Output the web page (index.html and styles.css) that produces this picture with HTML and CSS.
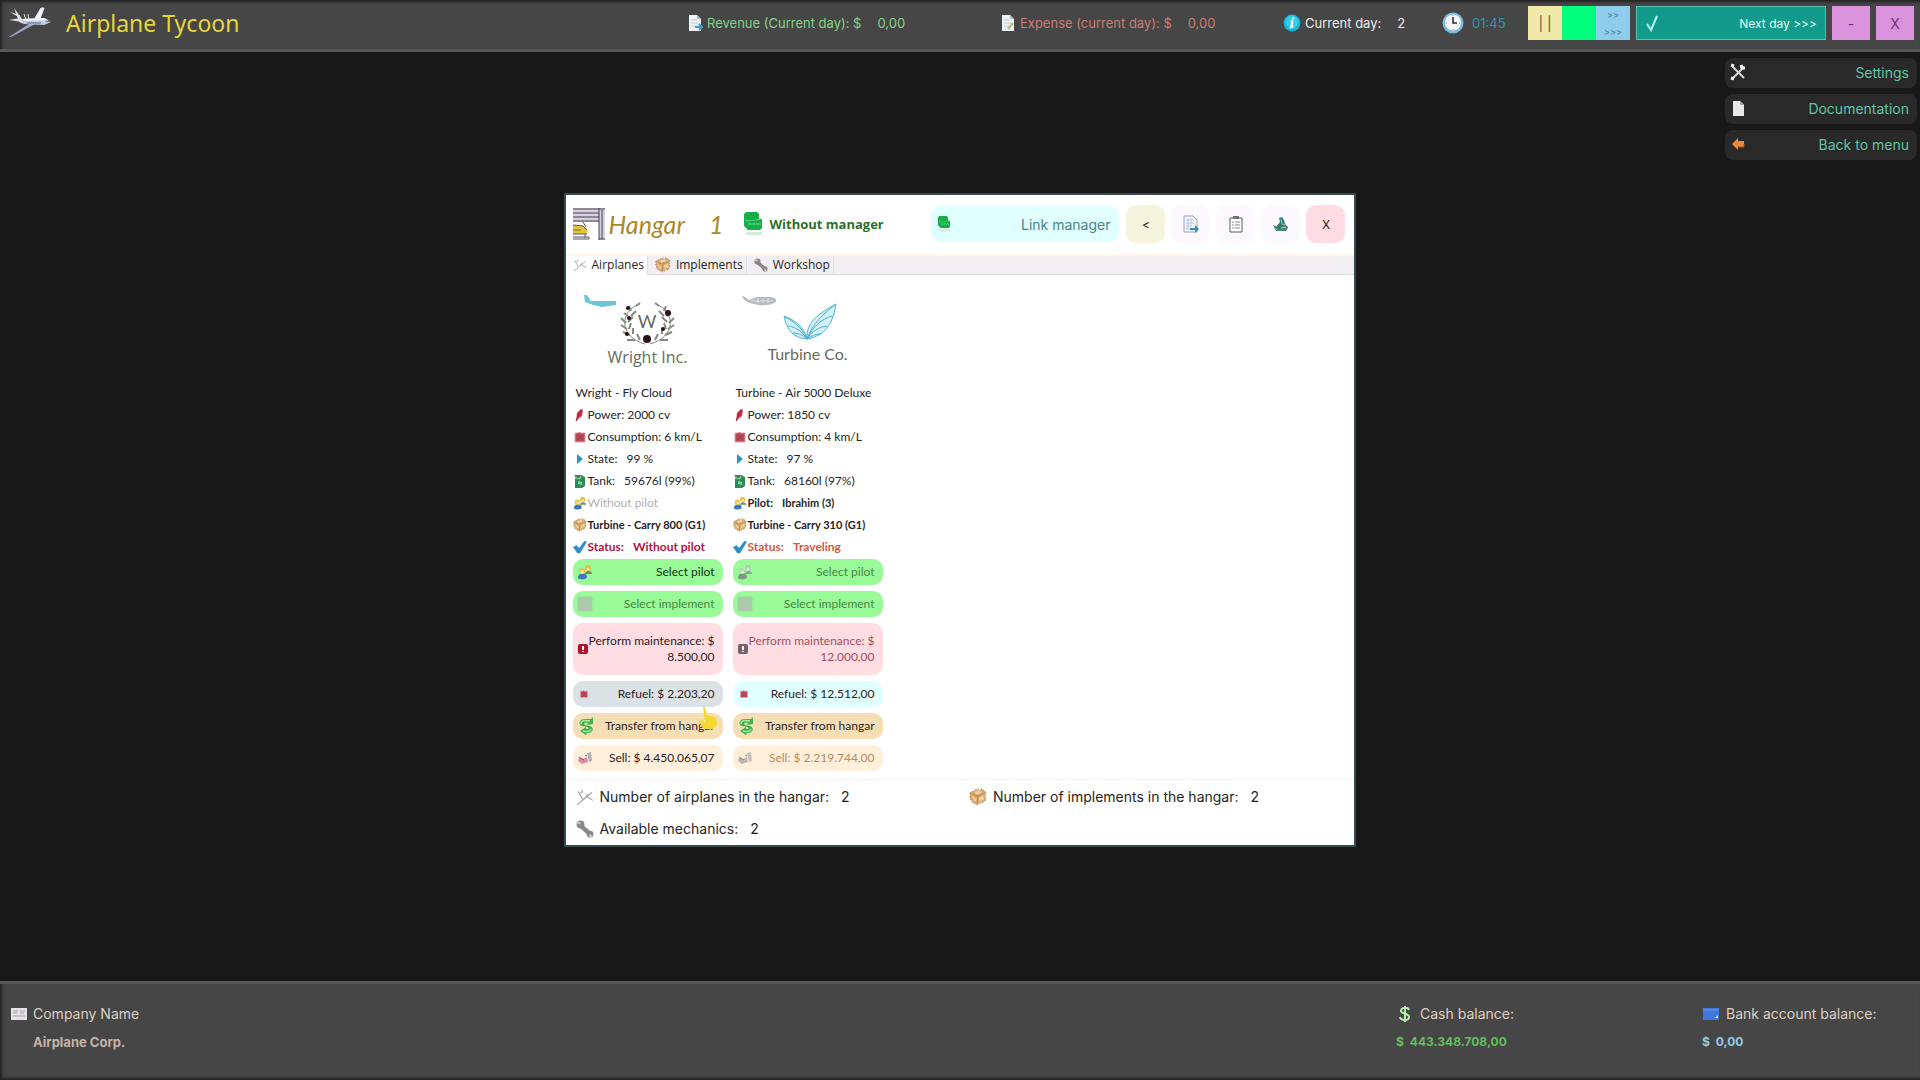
FILE: index.html
```html
<!DOCTYPE html>
<html lang="en">
<head>
    <meta charset="UTF-8">
    <meta name="viewport" content="width=device-width, initial-scale=1.0">
    <title>Airplane Tycoon</title>
    <link rel="stylesheet" href="styles.css">
</head>
<body>
    <svg class="sprite" aria-hidden="true">
        <symbol id="doc" viewBox="0 0 16 16"><path d="M2 0h8l4 4v12H2z" fill="#eef1f6"/><path d="M10 0l4 4h-4z" fill="#aeb9c6"/><path d="M4 5h6M4 8h7M4 11h5" stroke="#c3ccd8"/></symbol>
        <symbol id="info" viewBox="0 0 18 18"><circle cx="9" cy="9" r="8.5" fill="#18b4d8"/><circle cx="9" cy="8" r="6.5" fill="#36cbe8"/><path d="M10.5 3.5l-.4 2M9.7 7l-1.6 6.2 2-.8M7.8 7.6l1.9-.6" stroke="#fff" stroke-width="2" fill="none"/></symbol>
        <symbol id="clock" viewBox="0 0 22 22"><circle cx="11" cy="11" r="10.5" fill="#7db9de"/><circle cx="11" cy="10.5" r="8" fill="#f4f8fb"/><path d="M11 5v6h4" stroke="#233" stroke-width="1.6" fill="none"/><path d="M11 3v1M11 17v1M4 11h1M17 11h1" stroke="#789"/></symbol>
        <symbol id="craft" viewBox="0 0 16 16"><path d="M1 15L14 4M2 3l4 7M5 2l1 2M10 8l5 3" stroke="#a09aa2" fill="none"/><path d="M3 5l3-2M8 9l2-4" stroke="#c4b6b6" fill="none"/></symbol>
        <symbol id="crate" viewBox="0 0 18 18"><path d="M1 5l2-2 2 0 2-2 3 1 3-1 4 3-1 4 1 3-2 3-4 1-3 2-5-3-2-4z" fill="#dcae74"/><path d="M3 6l5 2 8-3M9 8l-1 8" stroke="#b28650" fill="none"/><path d="M4 9l3 4M10 10l5 1M11 13l3-5M6 4l6 1M11 3L7 6" stroke="#f3d6ab" stroke-width="1.5" fill="none"/><path d="M1 5l4-2 2-2 6 0 4 3-1 4 1 3-2 3-7 3-5-3-2-4z" stroke="#94704a" stroke-dasharray="1 2" fill="none"/></symbol>
        <symbol id="wrench" viewBox="0 0 16 16"><path d="M4 5l8 7" stroke="#89878b" stroke-width="4"/><circle cx="4" cy="4" r="3.5" fill="#89878b"/><circle cx="12.5" cy="12.5" r="3" fill="#89878b"/><path d="M0 2l4 1M12 13l3 3" stroke="#d8d6da" stroke-width="1.5"/></symbol>
        <symbol id="cash" viewBox="0 0 20 24"><path d="M1 2l2-2h11l2 2v5h3v9l-2 2H5l-4-4z" fill="#18ad46"/><path d="M2 8l4 1 12-2M5 12h13M7 11v2M11 11v2M15 11v2" stroke="#5fd284" fill="none"/><path d="M3 20h16v3H3z" fill="#d3ecd5"/></symbol>
        <symbol id="feather" viewBox="0 0 14 14"><path d="M3 13l1-8 4-4 2 1-1 6-4 3-1 2z" fill="#d8354c"/><path d="M8 2L3 13" stroke="#8b2337"/></symbol>
        <symbol id="fuel" viewBox="0 0 14 14"><path d="M2 3h3l1-1 2 1h4v9H2z" fill="#bd4a5b" stroke="#e0a3ab" stroke-linejoin="round"/><path d="M4 5l6 5M10 5l-6 5" stroke="#a93448"/></symbol>
        <symbol id="play" viewBox="0 0 14 14"><path d="M4 2l6 5-6 5z" fill="#2796c6"/></symbol>
        <symbol id="tank" viewBox="0 0 14 14"><path d="M2 1h6l4 2v9l-3 2H2z" fill="#2f8c55"/><path d="M3 4l4 1 1-3M1 1l2 4" stroke="#a3dcb6" fill="none"/><path d="M5 7l4 1v3l-4-1z" fill="#8bd1a2"/></symbol>
        <symbol id="people" viewBox="0 0 16 16"><path d="M8 10c0-4 7-4 7 0z" fill="#6d8f55"/><circle cx="11" cy="4" r="3" fill="#e5b93d"/><circle cx="11" cy="5" r="1.5" fill="#fae9a9"/><path d="M1 14c0-6 9-6 9-1 0 3-8 3-9 1z" fill="#3f78bf"/><circle cx="5" cy="7" r="3" fill="#e8c650"/><circle cx="5.5" cy="8" r="1.5" fill="#fff1b8"/></symbol>
        <symbol id="tick" viewBox="0 0 16 16"><path d="M0 8l4-2 3 3 6-8 3 1-8 13H5z" fill="#2e8fc4"/></symbol>
        <symbol id="box" viewBox="0 0 16 16"><path d="M1 1h14v14H1z" fill="#b8b5ba"/><path d="M1 1h14v14H1z" stroke="#a6b5a8" stroke-dasharray="2 1" fill="none"/></symbol>
        <symbol id="alert" viewBox="0 0 12 12"><rect x="1" y="1" width="10" height="10" rx="2" fill="#b3122c"/><path d="M6 3v4M6 8v1" stroke="#fff" stroke-width="2"/></symbol>
        <symbol id="swap" viewBox="0 0 18 18"><path d="M16 7L10 8l1-2C8 5 6 6 8 8l5 1c5 2 3 7-3 7l-1 2-6-4 6-4v2c3 0 3-1 1-2L5 9C0 7 3 1 9 2l5 0 2-2z" fill="#3bb54a"/><path d="M4 7c0-4 4-4 9-3M6 14c4 1 8 0 8-2" stroke="#a2e99d" stroke-width="1.5" fill="none"/></symbol>
        <symbol id="sell" viewBox="0 0 16 16"><path d="M2 6l4 3 4-2 1 5-6 2-4-3z" fill="#dc8fa6"/><path d="M10 3l4-1 1 9-3 1z" fill="#b5afba"/><path d="M3 8l4 2M8 5l2 1" stroke="#a83e61"/></symbol>
    </svg>

    <header class="topbar">
        <div class="brand">
            <svg width="44" height="32" viewBox="0 0 44 32">
                <path d="M1 30L24 15l5 1L3 30z" fill="#9ba6cb"/>
                <path d="M14 12l22-1 7 4-7 3-20-1z" fill="#c3cce4"/>
                <path d="M14 12l22-1 4 2-24 1z" fill="#f5f7fc"/>
                <path d="M6 1l8 11 2 5-5-2zM1 13l12-2 1 4zM2 5l10 3v3z" fill="#dde2ee"/>
                <path d="M27 11l6-10h3l-4 11zM16 7l2 6M20 7l1 6" fill="#f1f4fa" stroke="#e5e9f2"/>
                <path d="M38 14l4 1M19 16h14" stroke="#59627e"/>
            </svg>
            <h1>Airplane Tycoon</h1>
        </div>
        <div class="stat revenue"><svg width="16" height="16"><use href="#doc"/><path d="M8 12h7l-3-3M15 12l-3 3" stroke="#3f97d3" stroke-width="2" fill="none"/></svg>Revenue (Current day): $<span>0,00</span></div>
        <div class="stat expense"><svg width="16" height="16"><use href="#doc"/><path d="M8 14l5-6" stroke="#b4bd7b" stroke-width="2"/></svg>Expense (current day): $<span>0,00</span></div>
        <div class="stat day"><svg width="18" height="18"><use href="#info"/></svg>Current day:<span>2</span></div>
        <div class="stat time"><svg width="22" height="22"><use href="#clock"/></svg>01:45</div>
        <div class="controls">
            <div class="speed">
                <button class="pause" aria-label="Pause">| |</button>
                <button class="normal" aria-label="Normal speed"></button>
                <button class="fast" aria-label="Fast"><span>&gt;&gt;</span><span>&gt;&gt;&gt;</span></button>
            </div>
            <button class="next"><svg width="14" height="18" viewBox="0 0 14 18"><path d="M2 10l4 6 6-14" stroke="#b8f4f3" stroke-width="2" fill="none"/></svg>Next day &gt;&gt;&gt;</button>
            <button class="win">-</button>
            <button class="win">X</button>
        </div>
    </header>

    <main class="stage">
        <section class="hangar">
            <header class="hangar-head">
                <svg width="32" height="32" viewBox="0 0 32 32">
                    <path d="M0 0h32v32h-6V14H0z" fill="#d5d1df"/>
                    <path d="M0 1h32M0 5h26M0 9h26M0 13h26M26 0v32M29 2v29M26 31h6" stroke="#454052" fill="none"/>
                    <path d="M0 17l10 1 5 5-2 3H0z" fill="#e4c53c"/>
                    <path d="M0 17l10 1 4 4M0 26h14M10 14l3 5M0 29h16v2H0M12 26v4" stroke="#595064" fill="none"/>
                    <path d="M0 22h8" stroke="#806d22"/>
                </svg>
                <h2>Hangar<span>1</span></h2>
                <p class="manager"><svg width="20" height="24"><use href="#cash"/></svg>Without manager</p>
                <button class="link-manager"><svg width="14" height="16"><use href="#cash"/></svg>Link manager</button>
                <div class="tools">
                    <button class="back">&lt;</button>
                    <button aria-label="Export"><svg width="16" height="18" viewBox="0 0 16 18"><path d="M1 1h9l4 4v12H1z" fill="#f3f6fb" stroke="#9ba3b6"/><path d="M3 5h8M3 8h8M3 11h5M3 14h5M5 3v12M8 3v9" stroke="#bcc8da"/><path d="M7 13h5v-3l4 4-4 4v-3H7z" fill="#3b88c4"/></svg></button>
                    <button aria-label="Tasks"><svg width="14" height="18" viewBox="0 0 14 18"><path d="M1 3h12v14H1z" fill="#fff" stroke="#5c5660"/><path d="M4 1h6v3H4z" fill="#777079"/><path d="M3 7h2M6 7h5M3 10h2M6 10h5M3 13h2M6 13h5" stroke="#8d8791"/></svg></button>
                    <button aria-label="Terrain"><svg width="18" height="16" viewBox="0 0 18 16"><path d="M4 11l4-5-1-4 3-1 2 3 1 4 3 3-2 4H5z" fill="#357a77"/><path d="M1 9l3 1 2 4 6-4 4 2-3 3H4z" fill="#4d8574"/><path d="M9 3l1 5 3 1M2 12l3 2M9 12l5-1" stroke="#a3c8b5" fill="none"/></svg></button>
                    <button class="close">X</button>
                </div>
            </header>

            <nav class="tabs">
                <button class="active"><svg width="14" height="14"><use href="#craft"/></svg>Airplanes</button>
                <button><svg width="16" height="16"><use href="#crate"/></svg>Implements</button>
                <button><svg width="14" height="14"><use href="#wrench"/></svg>Workshop</button>
            </nav>

            <div class="planes">
                <article class="plane">
                    <figure class="wright">
                        <svg width="150" height="58" viewBox="0 0 150 58">
                            <path d="M11 4l3 0 4 6 25 0v4l-14 2-9-2-8-3z" fill="#6dc5d6"/>
                            <g fill="none" stroke="#858a80">
                                <path d="M66 13c-20 8-20 33 6 40M83 13c20 8 20 33-6 40"/>
                                <path stroke-width="2" d="M63 15l4-3M58 20l-2-5M55 25l-4-3M53 32l-5-5M54 38l-6-4M57 44l-7-3M62 49l-8 0M58 25l5-5M55 31l5-5M56 38l2-6M60 43l0-6M67 49l-3-6M86 15l-4-3M91 20l2-5M94 25l4-3M96 32l5-5M95 38l6-4M92 44l7-3M87 49l8 0M91 25l-5-5M94 31l-5-5M93 38l-2-6M89 43l0-6M82 49l3-6"/>
                            </g>
                            <g fill="#2a0f18"><circle cx="55" cy="17" r="2"/><circle cx="56" cy="27" r="2"/><circle cx="54" cy="43" r="2"/><circle cx="95" cy="22" r="3"/><circle cx="90" cy="38" r="2"/><circle cx="74" cy="48" r="4"/></g>
                            <text x="74" y="37" text-anchor="middle">W</text>
                        </svg>
                        <figcaption>Wright Inc.</figcaption>
                    </figure>
                    <h3>Wright - Fly Cloud</h3>
                    <ul>
                        <li><svg width="14" height="14"><use href="#feather"/></svg>Power: 2000 cv</li>
                        <li><svg width="14" height="14"><use href="#fuel"/></svg>Consumption: 6 km/L</li>
                        <li><svg width="14" height="14"><use href="#play"/></svg>State:<span>99 %</span></li>
                        <li><svg width="14" height="14"><use href="#tank"/></svg>Tank:<span>59676l (99%)</span></li>
                        <li class="muted"><svg width="14" height="14"><use href="#people"/></svg>Without pilot</li>
                        <li class="gear"><svg width="14" height="14"><use href="#crate"/></svg>Turbine - Carry 800 (G1)</li>
                        <li class="strong idle"><svg width="14" height="14"><use href="#tick"/></svg>Status:<span>Without pilot</span></li>
                    </ul>
                    <div class="actions">
                        <button class="select"><svg width="16" height="16"><use href="#people"/></svg>Select pilot</button>
                        <button class="select" disabled><svg width="16" height="16"><use href="#box"/></svg>Select implement</button>
                        <button class="maintain"><svg width="12" height="12"><use href="#alert"/></svg>Perform maintenance: $ 8.500,00</button>
                        <button class="refuel hovered"><svg width="14" height="10"><use href="#fuel"/></svg>Refuel: $ 2.203,20</button>
                        <button class="transfer"><svg width="18" height="18"><use href="#swap"/></svg>Transfer from hangar</button>
                        <button class="sell"><svg width="16" height="16"><use href="#sell"/></svg>Sell: $ 4.450.065,07</button>
                        <svg class="pointer" width="20" height="24" viewBox="0 0 20 24"><path d="M6 1l2 0 2 8 8 2 2 5-1 5-4 2H7l-5-7 1-2 5 2z" fill="#f5d832"/></svg>
                    </div>
                </article>

                <article class="plane">
                    <figure class="turbine">
                        <svg width="150" height="58" viewBox="0 0 150 58">
                            <path d="M9 5l3 1 4 3 8-3 12 0c5 0 8 2 7 5-6 4-15 4-22 2-6-1-11-4-12-8z" fill="#b5bcc1"/><path d="M18 10h22M25 7v5M30 7v5M35 7v5" stroke="#dfe3e6"/>
                            <g fill="#d3f3f8" stroke="#4fb0cc">
                                <path d="M74 48C58 47 53 35 51 25c10 4 20 10 23 23z"/>
                                <path d="M74 48c-1-18 12-25 29-35-2 12-6 31-29 35z"/>
                                <path d="M52 26c10 5 18 12 22 22M55 35c7 1 14 5 19 13M60 42c5 0 10 2 14 6M102 14C90 23 80 32 74 48M99 25c-10 3-19 10-25 23M94 35c-8 1-15 5-20 13M88 43c-6 0-10 2-14 5" fill="none"/>
                            </g>
                        </svg>
                        <figcaption>Turbine Co.</figcaption>
                    </figure>
                    <h3>Turbine - Air 5000 Deluxe</h3>
                    <ul>
                        <li><svg width="14" height="14"><use href="#feather"/></svg>Power: 1850 cv</li>
                        <li><svg width="14" height="14"><use href="#fuel"/></svg>Consumption: 4 km/L</li>
                        <li><svg width="14" height="14"><use href="#play"/></svg>State:<span>97 %</span></li>
                        <li><svg width="14" height="14"><use href="#tank"/></svg>Tank:<span>68160l (97%)</span></li>
                        <li class="gear"><svg width="14" height="14"><use href="#people"/></svg>Pilot:<span>Ibrahim (3)</span></li>
                        <li class="gear"><svg width="14" height="14"><use href="#crate"/></svg>Turbine - Carry 310 (G1)</li>
                        <li class="strong traveling"><svg width="14" height="14"><use href="#tick"/></svg>Status:<span>Traveling</span></li>
                    </ul>
                    <div class="actions">
                        <button class="select" disabled><svg width="16" height="16"><use href="#people"/></svg>Select pilot</button>
                        <button class="select" disabled><svg width="16" height="16"><use href="#box"/></svg>Select implement</button>
                        <button class="maintain" disabled><svg width="12" height="12"><use href="#alert"/></svg>Perform maintenance: $ 12.000,00</button>
                        <button class="refuel"><svg width="14" height="10"><use href="#fuel"/></svg>Refuel: $ 12.512,00</button>
                        <button class="transfer"><svg width="18" height="18"><use href="#swap"/></svg>Transfer from hangar</button>
                        <button class="sell" disabled><svg width="16" height="16"><use href="#sell"/></svg>Sell: $ 2.219.744,00</button>
                    </div>
                </article>
            </div>

            <footer class="summary">
                <div><svg width="18" height="18"><use href="#craft"/></svg>Number of airplanes in the hangar:<span>2</span></div>
                <div><svg width="18" height="18"><use href="#crate"/></svg>Number of implements in the hangar:<span>2</span></div>
                <div><svg width="18" height="18"><use href="#wrench"/></svg>Available mechanics:<span>2</span></div>
            </footer>
        </section>

        <nav class="menu">
            <button><svg width="18" height="18" viewBox="0 0 18 18"><path d="M3 3l12 12M15 4L4 15" stroke="#d7d7d9" stroke-width="2"/><path d="M12 2l1 3 3 0M2 2l3 1M2 15l3 1" stroke="#f2f2f2" stroke-width="3" fill="none"/></svg>Settings</button>
            <button><svg width="18" height="18" viewBox="0 0 18 18"><path d="M4 2h7l4 4v11H4z" fill="#e9e7e9"/><path d="M11 2l4 4h-4z" fill="#aaa"/></svg>Documentation</button>
            <button><svg width="18" height="18" viewBox="0 0 18 18"><path d="M3 9l6-6v3h6v6H9v3z" fill="#e98a3c"/><path d="M9 12h6v-3" stroke="#a95517" fill="none"/></svg>Back to menu</button>
        </nav>
    </main>

    <footer class="bottombar">
        <div class="company">
            <p><svg width="16" height="12" viewBox="0 0 16 12"><path d="M0 0h16v12H0z" fill="#e5e3e8"/><path d="M2 3h5M2 5h4M9 3h5M9 5h4M2 8h12" stroke="#a5a2aa"/></svg>Company Name</p>
            <strong>Airplane Corp.</strong>
        </div>
        <div class="balance cash">
            <p><svg width="18" height="18" viewBox="0 0 18 18"><path d="M13 5c-1-3-8-3-8 1 0 3 8 2 8 6 0 4-8 4-9 0M9 1v16" stroke="#b5efb0" stroke-width="2" fill="none"/></svg>Cash balance:</p>
            <strong>$<span>443.348.708,00</span></strong>
        </div>
        <div class="balance bank">
            <p><svg width="18" height="12" viewBox="0 0 18 12"><path d="M1 0h16v12H1z" fill="#3f78dc"/><path d="M1 2h16" stroke="#5f98ee"/><path d="M13 10l3-3v3z" fill="#dbe6ff"/></svg>Bank account balance:</p>
            <strong>$<span>0,00</span></strong>
        </div>
    </footer>
</body>
</html>
```
FILE: styles.css
```css
:root {
    --bar: #464646;
    --gothic: "Inter", sans-serif;
    --humanist: "Lato", sans-serif;
    --ui: "Open Sans", sans-serif;
}
* {
    box-sizing: border-box;
}
body {
    margin: 0;
    min-height: 100vh;
    display: flex;
    flex-direction: column;
    background-color: #181818;
    font-family: var(--gothic);
    font-size: 14px;
}
h1, h2, h3, p, ul, figure {
    margin: 0;
    padding: 0;
}
button {
    border: none;
    padding: 0;
    background: none;
    font-family: inherit;
    font-size: inherit;
    color: inherit;
    cursor: pointer;
}
svg {
    flex: none;
}
.sprite {
    position: absolute;
    width: 0;
    height: 0;
}

/* Top bar */
.topbar {
    display: grid;
    grid-template-columns: 679fr 313fr 283fr 159fr 86fr auto;
    align-items: center;
    height: 52px;
    padding: 0 6px 3px 8px;
    background-color: var(--bar);
    border-bottom: 3px solid #595959;
    box-shadow: inset 2px 2px 3px #222;
}
.brand {
    display: flex;
    align-items: center;
    gap: 14px;
}
.brand h1 {
    font-family: "Noto Sans", sans-serif;
    font-size: 23px;
    font-weight: normal;
    line-height: 30px;
    color: #e6d63c;
}
.stat {
    display: flex;
    align-items: center;
    gap: 4px;
    font-size: 13px;
    white-space: nowrap;
}
.stat span {
    margin-left: 12px;
}
.revenue { color: #85d287; }
.expense { color: #cb7c76; }
.day { color: #ececec; }
.time { color: #3294b4; gap: 8px; }
.controls {
    display: flex;
    gap: 6px;
    height: 34px;
}
.speed {
    display: flex;
    width: 102px;
}
.speed button {
    flex: 1;
}
.pause {
    background-color: #f0e9aa;
    color: #5a5840;
}
.normal {
    background-color: #00ff7c;
}
.fast {
    display: flex;
    flex-direction: column;
    align-items: center;
    justify-content: space-around;
    background-color: #8ecdeb;
    color: #47748f;
    font-size: 9px;
}
.next {
    display: flex;
    align-items: center;
    justify-content: space-between;
    width: 190px;
    padding: 0 8px;
    background-color: #129b8b;
    border: 1px solid #58bdb2;
    color: #e0f8f4;
    font-size: 12px;
}
.win {
    width: 38px;
    background-color: #da92dc;
    color: #703574;
}

/* Work area */
.stage {
    flex: 1;
    display: grid;
    grid-template-columns: 1fr 41.3% 1fr;
    padding-top: 6px;
}
.menu {
    justify-self: end;
    display: flex;
    flex-direction: column;
    gap: 6px;
    width: 192px;
    margin: 0 3px;
}
.menu button {
    display: flex;
    align-items: center;
    justify-content: space-between;
    height: 30px;
    padding: 0 8px 2px 4px;
    border-radius: 8px;
    background-color: #292929;
    color: #5fc5a5;
}
.hangar {
    grid-column: 2;
    align-self: center;
    background-color: #fff;
    border: 2px solid #3a4b4b;
    color: #252525;
}
.hangar-head {
    display: flex;
    align-items: center;
    height: 61px;
    border-bottom: 2px solid #fff6ec;
    padding: 0 9px 0 7px;
}
.hangar-head h2 {
    display: flex;
    gap: 24px;
    margin-left: 4px;
    font-family: var(--humanist);
    font-size: 25px;
    font-style: italic;
    font-weight: normal;
    line-height: 30px;
    color: #aa8a2b;
}
.manager {
    display: flex;
    align-items: center;
    gap: 6px;
    margin-left: 20px;
    font-family: var(--ui);
    font-size: 13px;
    font-weight: bold;
    color: #2b702b;
}
.link-manager {
    display: flex;
    align-items: center;
    justify-content: space-between;
    width: 188px;
    height: 36px;
    margin-left: auto;
    padding: 0 9px 0 6px;
    border-radius: 10px;
    background-color: #e0ffff;
    color: #4c8586;
}
.tools {
    display: flex;
    gap: 6px;
    margin-left: 7px;
}
.tools button {
    display: flex;
    align-items: center;
    justify-content: center;
    width: 39px;
    height: 38px;
    border-radius: 10px;
    background-color: #fcf9fe;
    font-size: 12px;
}
.tools .back { background-color: #f5f4dd; }
.tools .close { background-color: #ffdce3; }

.tabs {
    display: flex;
    height: 19px;
    background-color: #f2eff2;
    border-bottom: 1px solid #dcd8dd;
    font-family: var(--ui);
    font-size: 12px;
}
.tabs button {
    display: flex;
    align-items: center;
    gap: 5px;
    padding: 0 3px 0 7px;
    line-height: 18px;
    border-right: 1px solid #e0dce2;
}
.tabs .active {
    height: 19px;
    background-color: #fff;
}

.planes {
    display: flex;
    gap: 10px;
    padding: 16px 7px 8px;
    border-bottom: 1px solid #fff0dc;
    font-family: var(--humanist);
    font-size: 12px;
}
.plane {
    width: 150px;
}
.plane figure {
    height: 91px;
    text-align: center;
}
.plane figure svg {
    display: block;
}
.plane figure text {
    font-size: 18px;
    fill: #66695f;
}
.plane figcaption {
    font-size: 16px;
    line-height: 10px;
    color: #676b61;
}
.wright figcaption {
    font-family: var(--ui);
    line-height: 16px;
}
.plane h3 {
    padding-left: 3px;
    font-size: 12px;
    font-weight: normal;
    line-height: 22px;
}
.plane ul {
    list-style: none;
}
.plane li {
    display: flex;
    align-items: center;
    gap: 1px;
    height: 22px;
    white-space: nowrap;
}
.plane li span {
    margin-left: 8px;
}
.plane .muted { color: #b2b0b3; }
.plane .strong { font-weight: bold; }
.plane .gear { font-size: 11px; font-weight: bold; }
.plane .idle { color: #b5123d; }
.plane .traveling { color: #d35a3c; }

.actions {
    position: relative;
    display: flex;
    flex-direction: column;
    gap: 6px;
    padding-top: 1px;
}
.actions button {
    display: flex;
    align-items: center;
    justify-content: space-between;
    height: 26px;
    padding: 0 8px 0 4px;
    border-radius: 10px;
    line-height: 16px;
    text-align: right;
    color: #2e2222;
}
.actions .select {
    background-color: #98fb98;
    color: #113511;
}
.actions .select:disabled { color: #468746; }
.actions .maintain {
    height: 52px;
    background-color: #ffdde3;
}
.actions .maintain:disabled { color: #a65059; }
.actions .refuel { background-color: #e0ffff; }
.actions .hovered { background-color: #dbe2e6; }
.actions .transfer { background-color: #f5deb3; }
.actions .sell { background-color: #ffefdb; }
.actions .sell:disabled { color: #b88d5c; }
.actions button:disabled svg {
    filter: grayscale(1);
    opacity: 0.7;
}
.pointer {
    position: absolute;
    right: 6px;
    bottom: 41px;
}

.summary {
    display: grid;
    grid-template-columns: 393fr 378fr;
    padding: 1px 7px 0 10px;
}
.summary div {
    display: flex;
    align-items: center;
    gap: 6px;
    height: 32px;
}
.summary span {
    margin-left: 6px;
}

/* Bottom bar */
.bottombar {
    display: grid;
    grid-template-columns: 1385fr 306fr 218fr;
    height: 99px;
    padding: 20px 0 0 11px;
    background-color: var(--bar);
    border-top: 3px solid #595959;
    box-shadow: inset 2px -2px 3px #222;
    color: #ddd0c5;
}
.bottombar p {
    display: flex;
    align-items: center;
    gap: 6px;
    line-height: 20px;
}
.bottombar strong {
    display: block;
    margin-top: 8px;
    font-size: 12px;
    line-height: 20px;
}
.bottombar .company strong {
    padding-left: 22px;
    font-size: 13px;
    color: #c7b2a5;
}
.balance span {
    margin-left: 6px;
}
.cash strong { color: #62bd5c; }
.bank strong { color: #93cbe1; }
```
